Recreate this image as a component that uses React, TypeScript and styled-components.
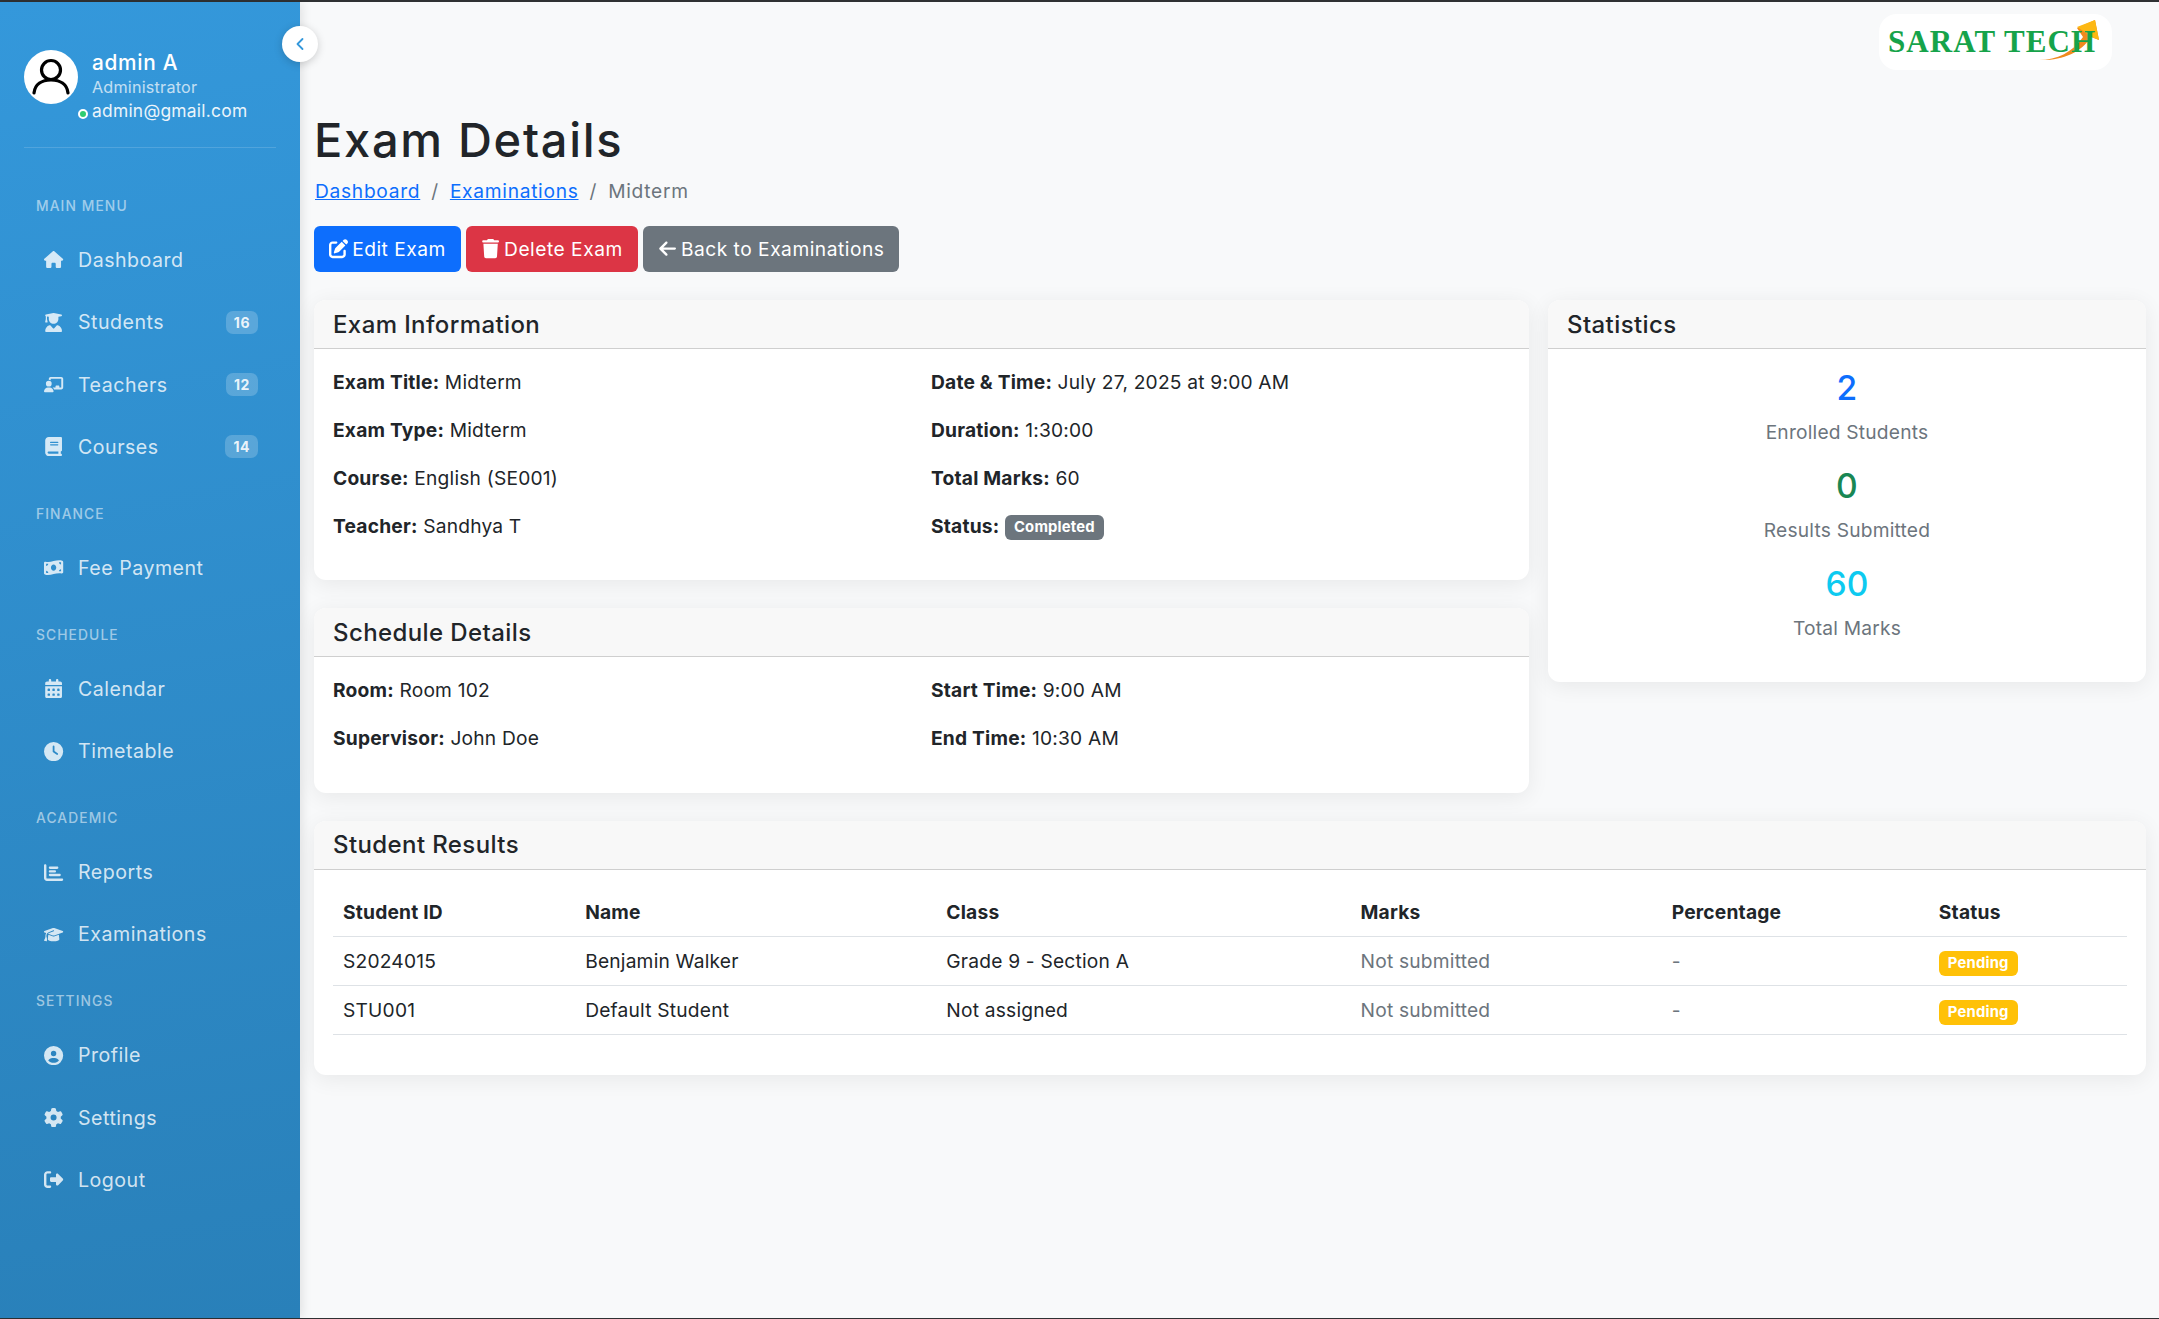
import React from "react";
import styled, { createGlobalStyle } from "styled-components";
import {
  FaHouse,
  FaUserGraduate,
  FaChalkboardUser,
  FaBook,
  FaMoneyBillWave,
  FaCalendarDays,
  FaClock,
  FaChartBar,
  FaGraduationCap,
  FaCircleUser,
  FaGear,
  FaRightFromBracket,
  FaPenToSquare,
  FaTrash,
  FaArrowLeft,
} from "react-icons/fa6";
import { ChevronLeft } from "lucide-react";

const GlobalStyle = createGlobalStyle`
  html, body {
    margin: 0;
    padding: 0;
    height: 100%;
    overflow: hidden;
  }
  body {
    font-family: Inter, "Open Sans", sans-serif;
    font-size: 19.2px;
    letter-spacing: 0.2px;
    color: #212529;
    background: #f8f9fa;
  }
  * { box-sizing: border-box; }
`;

const Page = styled.div`
  display: flex;
  height: 1319px;
  border-top: 2px solid #2f3133;
  border-bottom: 1px solid #2f3133;
  background: #f8f9fa;
`;

const Sidebar = styled.aside`
  position: relative;
  flex: 0 0 300px;
  background: linear-gradient(170deg, #3498db 0%, #2980b9 100%);
  box-shadow: 2px 0 10px rgba(0, 0, 0, 0.1);
  color: #fff;
`;

const Toggle = styled.button`
  position: absolute;
  top: 24px;
  right: -18px;
  width: 36px;
  height: 36px;
  border: 0;
  border-radius: 50%;
  background: #fff;
  color: #3498db;
  box-shadow: 0 2px 8px rgba(0, 0, 0, 0.18);
  display: flex;
  align-items: center;
  justify-content: center;
  padding: 0;
`;

const Profile = styled.div`
  position: relative;
  display: flex;
  gap: 14px;
  margin: 0 24px;
  padding: 47px 0 23px;
  border-bottom: 1px solid rgba(255, 255, 255, 0.15);
`;

const Avatar = styled.div`
  flex: 0 0 54px;
  width: 54px;
  height: 54px;
  margin-top: 1px;
  border-radius: 50%;
  background: #fff;
  display: flex;
  align-items: center;
  justify-content: center;
`;

const ProfileText = styled.div`
  display: flex;
  flex-direction: column;
  white-space: nowrap;
`;

const ProfileName = styled.div`
  font-size: 20.8px;
  font-weight: 500;
  line-height: 28px;
  letter-spacing: 0.7px;
`;

const ProfileRole = styled.div`
  font-size: 16.2px;
  line-height: 21px;
  letter-spacing: 0.2px;
  opacity: 0.7;
`;

const ProfileMail = styled.div`
  font-size: 17.4px;
  line-height: 26px;
  letter-spacing: 0.25px;
  opacity: 0.9;
`;

const StatusDot = styled.span`
  position: absolute;
  left: 54px;
  top: 107px;
  width: 10px;
  height: 10px;
  border-radius: 50%;
  background: #2ecc71;
  border: 2px solid #fff;
`;

const Nav = styled.nav`
  padding-top: 48px;
`;

const Section = styled.div`
  margin-bottom: 34px;
`;

const SectionLabel = styled.div`
  margin: 0 0 21px 36px;
  font-size: 13.8px;
  line-height: 20px;
  font-weight: 500;
  letter-spacing: 1.1px;
  text-transform: uppercase;
  color: rgba(255, 255, 255, 0.55);
`;

const NavList = styled.div`
  display: flex;
  flex-direction: column;
  gap: 16.3px;
`;

const NavItem = styled.a`
  display: flex;
  align-items: center;
  height: 46px;
  padding: 0 42px;
  gap: 12px;
  font-size: 19.6px;
  letter-spacing: 0.5px;
  color: rgba(255, 255, 255, 0.8);
`;

const NavIcon = styled.span`
  flex: 0 0 24px;
  display: flex;
  justify-content: center;
  svg {
    height: 19.2px;
    width: auto;
  }
`;

const NavCount = styled.span`
  margin-left: auto;
  height: 23px;
  min-width: 32px;
  padding: 0 8px;
  border-radius: 7px;
  background: rgba(255, 255, 255, 0.2);
  color: rgba(255, 255, 255, 0.9);
  display: flex;
  align-items: center;
  justify-content: center;
  font-size: 14px;
  font-weight: 700;
`;

const Main = styled.main`
  flex: 1;
  min-width: 0;
  padding: 12px 13px 0 14px;
`;

const TopRow = styled.div`
  display: flex;
  justify-content: flex-end;
  height: 98px;
  padding-right: 34px;
`;

const LogoBox = styled.div`
  position: relative;
  width: 233px;
  height: 56px;
  padding-left: 9px;
  border-radius: 18px;
  background: #fff;
  display: flex;
  align-items: center;
`;

const LogoMark = styled.svg`
  position: absolute;
  left: 0;
  top: 0;
`;

const LogoText = styled.span`
  position: relative;
  font-family: "Liberation Serif", serif;
  font-weight: 700;
  font-size: 31px;
  letter-spacing: 1.1px;
  color: #16a34a;
  white-space: nowrap;
`;

const Title = styled.h1`
  margin: 0;
  font-size: 47px;
  line-height: 55px;
  font-weight: 500;
  letter-spacing: 1.7px;
`;

const Crumbs = styled.div`
  display: flex;
  gap: 11px;
  height: 29px;
  margin: 9px 0 21px;
  padding-left: 1px;
  align-items: center;
  color: #6c757d;
  letter-spacing: 0.7px;
`;

const CrumbLink = styled.a`
  color: #0d6efd;
  text-decoration: underline;
`;

const Actions = styled.div`
  display: flex;
  gap: 5px;
  margin-bottom: 28px;
`;

const Button = styled.a<{ $bg: string }>`
  display: flex;
  align-items: center;
  gap: 4px;
  height: 46px;
  padding: 0 15px;
  border-radius: 6px;
  background: ${(p) => p.$bg};
  color: #fff;
  letter-spacing: 0.5px;
  white-space: nowrap;
  svg {
    height: 19.2px;
    width: auto;
  }
`;

const Columns = styled.div`
  display: grid;
  grid-template-columns: 1215px 598px;
  column-gap: 19px;
  align-items: start;
`;

const Card = styled.section`
  background: #fff;
  border-radius: 12px;
  box-shadow: 0 4px 22px rgba(0, 0, 0, 0.07);
  margin-bottom: 28px;
  overflow: hidden;
`;

const CardHeader = styled.h5`
  margin: 0;
  height: 49px;
  padding: 0 19px;
  display: flex;
  align-items: center;
  font-size: 24px;
  font-weight: 500;
  letter-spacing: 0.4px;
  background: #f8f8f8;
  border-bottom: 1px solid #cfcfcf;
`;

const CardBody = styled.div`
  padding: 19px 19px 20.4px;
`;

const InfoGrid = styled.div`
  display: grid;
  grid-template-columns: 598px 1fr;
`;

const InfoRow = styled.div`
  height: 28.8px;
  line-height: 28.8px;
  margin-bottom: 19.2px;
  white-space: nowrap;
`;

const Label = styled.strong`
  font-weight: 700;
`;

const Badge = styled.span<{ $bg: string; $low?: boolean }>`
  display: inline-block;
  height: 25px;
  line-height: 25px;
  padding: 0 9px;
  border-radius: 6px;
  background: ${(p) => p.$bg};
  color: #fff;
  font-size: 14.8px;
  font-weight: 700;
  vertical-align: middle;
  margin-top: ${(p) => (p.$low ? "4px" : "0")};
`;

const Stat = styled.div`
  text-align: center;
  margin-bottom: 19.2px;
`;

const StatValue = styled.div<{ $color: string }>`
  font-size: 33.6px;
  line-height: 40.3px;
  font-weight: 500;
  color: ${(p) => p.$color};
  margin-bottom: 9.6px;
`;

const StatLabel = styled.div`
  line-height: 28.8px;
  color: #6c757d;
`;

const Table = styled.table`
  width: 100%;
  border-collapse: collapse;
  table-layout: fixed;
  margin-bottom: 19px;
`;

const HeadCell = styled.th<{ $w: number }>`
  width: ${(p) => p.$w}px;
  height: 48px;
  padding: 0 10px;
  text-align: left;
  font-weight: 700;
  border-bottom: 1px solid #dee2e6;
`;

const Cell = styled.td<{ $muted?: boolean }>`
  height: 49px;
  padding: 0 10px;
  border-bottom: 1px solid #dee2e6;
  color: ${(p) => (p.$muted ? "#6c757d" : "#212529")};
`;

const navGroups = [
  {
    label: "Main Menu",
    items: [
      { icon: <FaHouse />, text: "Dashboard" },
      { icon: <FaUserGraduate />, text: "Students", count: 16 },
      { icon: <FaChalkboardUser />, text: "Teachers", count: 12 },
      { icon: <FaBook />, text: "Courses", count: 14 },
    ],
  },
  { label: "Finance", items: [{ icon: <FaMoneyBillWave />, text: "Fee Payment" }] },
  {
    label: "Schedule",
    items: [
      { icon: <FaCalendarDays />, text: "Calendar" },
      { icon: <FaClock />, text: "Timetable" },
    ],
  },
  {
    label: "Academic",
    items: [
      { icon: <FaChartBar />, text: "Reports" },
      { icon: <FaGraduationCap />, text: "Examinations" },
    ],
  },
  {
    label: "Settings",
    items: [
      { icon: <FaCircleUser />, text: "Profile" },
      { icon: <FaGear />, text: "Settings" },
      { icon: <FaRightFromBracket />, text: "Logout" },
    ],
  },
];

const results = [
  { id: "S2024015", name: "Benjamin Walker", cls: "Grade 9 - Section A" },
  { id: "STU001", name: "Default Student", cls: "Not assigned" },
];

function App() {
  return (
    <Page>
      <GlobalStyle />
      <Sidebar>
        <Toggle>
          <ChevronLeft size={20} strokeWidth={2.2} />
        </Toggle>
        <Profile>
          <Avatar>
            <svg width="42" height="42" viewBox="0 0 42 42" fill="none" stroke="#000" strokeWidth="3.2" strokeLinecap="round">
              <circle cx="21" cy="14" r="9.5" />
              <path d="M4 37c1-9 8-13 17-13s16 4 17 13" />
            </svg>
          </Avatar>
          <ProfileText>
            <ProfileName>admin A</ProfileName>
            <ProfileRole>Administrator</ProfileRole>
            <ProfileMail>admin@gmail.com</ProfileMail>
          </ProfileText>
          <StatusDot />
        </Profile>
        <Nav>
          {navGroups.map((group) => (
            <Section key={group.label}>
              <SectionLabel>{group.label}</SectionLabel>
              <NavList>
                {group.items.map((item: any) => (
                  <NavItem key={item.text}>
                    <NavIcon>{item.icon}</NavIcon>
                    {item.text}
                    {item.count && <NavCount>{item.count}</NavCount>}
                  </NavItem>
                ))}
              </NavList>
            </Section>
          ))}
        </Nav>
      </Sidebar>
      <Main>
        <TopRow>
          <LogoBox>
            <LogoMark width="233" height="56" viewBox="0 0 233 56">
              <path d="M160 46c18 0 34-8 44-23l-6-9 18-8 4 20-8-3c-10 16-30 24-52 23z" fill="#f08a1d" />
              <path d="M198 13l18-7 4 20-7-3z" fill="#fdb813" />
            </LogoMark>
            <LogoText>SARAT TECH</LogoText>
          </LogoBox>
        </TopRow>
        <Title>Exam Details</Title>
        <Crumbs>
          <CrumbLink>Dashboard</CrumbLink>
          <span>/</span>
          <CrumbLink>Examinations</CrumbLink>
          <span>/</span>
          <span>Midterm</span>
        </Crumbs>
        <Actions>
          <Button $bg="#0d6efd">
            <FaPenToSquare />
            Edit Exam
          </Button>
          <Button $bg="#dc3545">
            <FaTrash />
            Delete Exam
          </Button>
          <Button $bg="#6c757d">
            <FaArrowLeft />
            Back to Examinations
          </Button>
        </Actions>
        <Columns>
          <div>
            <Card>
              <CardHeader>Exam Information</CardHeader>
              <CardBody>
                <InfoGrid>
                  <InfoRow><Label>Exam Title:</Label> Midterm</InfoRow>
                  <InfoRow><Label>Date &amp; Time:</Label> July 27, 2025 at 9:00 AM</InfoRow>
                  <InfoRow><Label>Exam Type:</Label> Midterm</InfoRow>
                  <InfoRow><Label>Duration:</Label> 1:30:00</InfoRow>
                  <InfoRow><Label>Course:</Label> English (SE001)</InfoRow>
                  <InfoRow><Label>Total Marks:</Label> 60</InfoRow>
                  <InfoRow><Label>Teacher:</Label> Sandhya T</InfoRow>
                  <InfoRow><Label>Status:</Label> <Badge $bg="#6c757d">Completed</Badge></InfoRow>
                </InfoGrid>
              </CardBody>
            </Card>
            <Card>
              <CardHeader>Schedule Details</CardHeader>
              <CardBody>
                <InfoGrid>
                  <InfoRow><Label>Room:</Label> Room 102</InfoRow>
                  <InfoRow><Label>Start Time:</Label> 9:00 AM</InfoRow>
                  <InfoRow><Label>Supervisor:</Label> John Doe</InfoRow>
                  <InfoRow><Label>End Time:</Label> 10:30 AM</InfoRow>
                </InfoGrid>
              </CardBody>
            </Card>
          </div>
          <Card>
            <CardHeader>Statistics</CardHeader>
            <CardBody>
              <Stat>
                <StatValue $color="#0d6efd">2</StatValue>
                <StatLabel>Enrolled Students</StatLabel>
              </Stat>
              <Stat>
                <StatValue $color="#198754">0</StatValue>
                <StatLabel>Results Submitted</StatLabel>
              </Stat>
              <Stat>
                <StatValue $color="#0dcaf0">60</StatValue>
                <StatLabel>Total Marks</StatLabel>
              </Stat>
            </CardBody>
          </Card>
        </Columns>
        <Card>
          <CardHeader>Student Results</CardHeader>
          <CardBody>
            <Table>
              <thead>
                <tr>
                  <HeadCell $w={242}>Student ID</HeadCell>
                  <HeadCell $w={361}>Name</HeadCell>
                  <HeadCell $w={414}>Class</HeadCell>
                  <HeadCell $w={311}>Marks</HeadCell>
                  <HeadCell $w={267}>Percentage</HeadCell>
                  <HeadCell $w={198}>Status</HeadCell>
                </tr>
              </thead>
              <tbody>
                {results.map((r) => (
                  <tr key={r.id}>
                    <Cell>{r.id}</Cell>
                    <Cell>{r.name}</Cell>
                    <Cell>{r.cls}</Cell>
                    <Cell $muted>Not submitted</Cell>
                    <Cell $muted>-</Cell>
                    <Cell><Badge $bg="#ffc107" $low>Pending</Badge></Cell>
                  </tr>
                ))}
              </tbody>
            </Table>
          </CardBody>
        </Card>
      </Main>
    </Page>
  );
}

export default App;
